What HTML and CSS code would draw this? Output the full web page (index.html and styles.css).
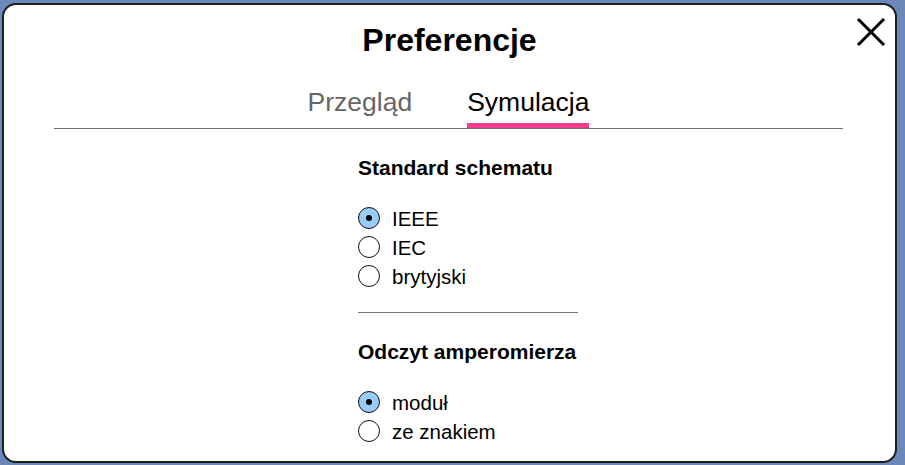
FILE: index.html
```html
<!DOCTYPE html>
<html lang="pl">
<head>
  <meta charset="UTF-8">
  <title>Preferencje</title>
  <link rel="stylesheet" href="styles.css">
</head>
<body>
  <div class="dialog">
    <h1 class="title">Preferencje</h1>
    <button class="close" aria-label="Zamknij">
      <svg width="30" height="30" viewBox="0 0 30 30">
        <path d="M2 2 L28 28 M28 2 L2 28" stroke="#000" stroke-width="3" fill="none"/>
      </svg>
    </button>
    <div class="tabs">
      <div class="tab">Przegląd</div>
      <div class="tab active">Symulacja</div>
    </div>
    <div class="panel">
      <h2 class="section-title">Standard schematu</h2>
      <div class="options">
        <label class="option"><input type="radio" name="std" checked> IEEE</label>
        <label class="option"><input type="radio" name="std"> IEC</label>
        <label class="option"><input type="radio" name="std"> brytyjski</label>
      </div>
      <hr class="sep">
      <h2 class="section-title">Odczyt amperomierza</h2>
      <div class="options">
        <label class="option"><input type="radio" name="amp" checked> moduł</label>
        <label class="option"><input type="radio" name="amp"> ze znakiem</label>
      </div>
    </div>
  </div>
</body>
</html>
```

FILE: styles.css
```css
html, body {
  margin: 0; padding: 0;
  font-family: "Liberation Sans", Arial, sans-serif;
  background: #6b88ba; color: #000;
  overflow: hidden;
}
.dialog {
  position: relative;
  box-sizing: border-box;
  width: 895px; height: 460px;
  margin: 3px 0 0 2px;
  background: #fff;
  border: 2px solid #1e1e1e;
  border-radius: 14px;
}
.title {
  margin: 0;
  padding-top: 17px;
  font-size: 32px; line-height: 37px;
  font-weight: bold; text-align: center;
}
.close {
  position: absolute;
  top: 12px; left: 852px;
  width: 30px; height: 30px;
  padding: 0; border: 0; background: none;
}
.close svg { display: block; }
/* zakładki */
.tabs {
  display: flex; justify-content: center; gap: 55px;
  margin: 28px 52px 0 50px;
  border-bottom: 1px solid #6e6e6e;
}
.tab {
  font-size: 26.5px; line-height: 30px;
  color: #666;
  padding-bottom: 6px;
  border-bottom: 5px solid transparent;
}
.tab.active { color: #000; border-bottom-color: #f23b8d; }
.panel {
  padding-left: 354px;
  width: 220px;
}
.section-title {
  margin: 27px 0 24px 0;
  font-size: 21px; line-height: 24px; font-weight: bold;
}
.options { display: flex; flex-direction: column; }
.option {
  display: flex; align-items: center; gap: 12px;
  font-size: 20.5px; line-height: 29px;
}
.option input {
  appearance: none; -webkit-appearance: none;
  margin: 0;
  width: 22px; height: 22px;
  border: 1.7px solid #111;
  border-radius: 50%;
  background: #fff;
  position: relative;
  top: -1px;
}
.option input:checked { background: #9acaf8; }
.option input:checked::after {
  content: ""; position: absolute;
  left: 50%; top: 50%;
  width: 6px; height: 6px; margin: -3px 0 0 -3px;
  border-radius: 50%; background: #000;
}
.sep {
  margin: 21px 0 0 0;
  border: 0; border-top: 1px solid #777;
  height: 0;
}
```
